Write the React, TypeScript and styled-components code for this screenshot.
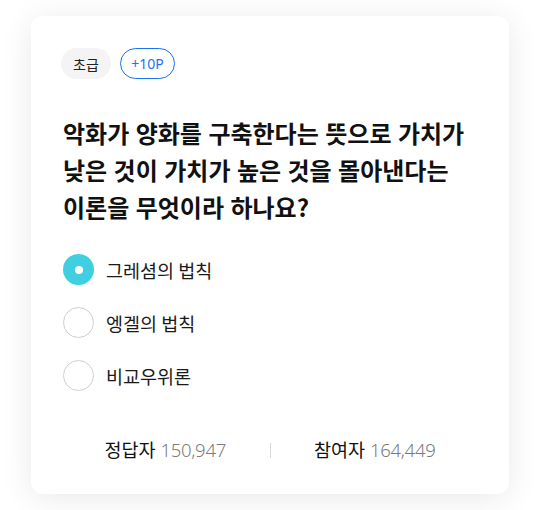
import React, { useState } from "react";
import styled, { createGlobalStyle } from "styled-components";

const Global = createGlobalStyle`
  html, body { margin: 0; padding: 0; background: #ffffff; }
  body { font-family: "Noto Sans", "Noto Sans CJK KR", sans-serif; color: #111; }
  * { box-sizing: border-box; }
`;

const Page = styled.div`
  padding: 16px 31px 16px 31px;
`;

const Card = styled.div`
  width: 478px;
  height: 478px;
  background: #fff;
  border-radius: 12px;
  box-shadow: 0 4px 32px rgba(0, 0, 0, 0.09);
  padding: 32px 30px 0 30px;
  display: flex;
  flex-direction: column;
`;

const Tags = styled.div`
  display: flex;
  gap: 9px;
`;

const Tag = styled.span<{ $variant: "level" | "point" }>`
  display: inline-flex;
  align-items: center;
  justify-content: center;
  height: 31px;
  width: ${(p) => (p.$variant === "level" ? "50px" : "55px")};
  border-radius: 16px;
  font-size: 14px;
  background: ${(p) => (p.$variant === "level" ? "#f4f4f4" : "#fff")};
  color: ${(p) => (p.$variant === "level" ? "#222" : "#1a73f0")};
  border: ${(p) => (p.$variant === "level" ? "none" : "1px solid #1a73f0")};
`;

const Question = styled.h2`
  margin: 35px 0 0 2px;
  font-family: "Noto Sans CJK KR", "Noto Sans", sans-serif;
  font-size: 24px;
  font-weight: 700;
  line-height: 37px;
  white-space: nowrap;
  word-spacing: 1px;
  color: #111;
`;

const Options = styled.div`
  margin-top: 29px;
  display: flex;
  flex-direction: column;
  gap: 22px;
`;

const Option = styled.label`
  display: flex;
  align-items: center;
  gap: 12px;
  cursor: pointer;
  padding-left: 2px;
`;

const Radio = styled.span<{ $checked: boolean }>`
  width: 31px;
  height: 31px;
  border-radius: 50%;
  flex: none;
  display: flex;
  align-items: center;
  justify-content: center;
  background: ${(p) => (p.$checked ? "#3fcfe1" : "#fff")};
  border: ${(p) => (p.$checked ? "none" : "1.5px solid #cfcfcf")};
  &::after {
    content: "";
    display: ${(p) => (p.$checked ? "block" : "none")};
    width: 8px;
    height: 8px;
    border-radius: 50%;
    background: #fff;
  }
`;

const OptionText = styled.span`
  font-family: "Noto Sans CJK KR", sans-serif;
  font-size: 18.5px;
  color: #1a1a1a;
`;

const Stats = styled.div`
  margin-top: 47px;
  display: flex;
  align-items: center;
`;

const Stat = styled.div`
  flex: 1;
  text-align: center;
  font-size: 18.5px;
  line-height: 24px;
  color: #111;
`;

const Num = styled.span`
  color: #7c7c7c;
  font-weight: 300;
  letter-spacing: -0.3px;
`;

const Divider = styled.span`
  width: 1px;
  height: 15px;
  background: #d8d8d8;
`;

const options = ["그레셤의 법칙", "엥겔의 법칙", "비교우위론"];

export default function App() {
  const [sel, setSel] = useState(0);
  return (
    <Page>
      <Global />
      <Card>
        <Tags>
          <Tag $variant="level">초급</Tag>
          <Tag $variant="point">+10P</Tag>
        </Tags>
        <Question>
          악화가 양화를 구축한다는 뜻으로 가치가
          <br />
          낮은 것이 가치가 높은 것을 몰아낸다는
          <br />
          이론을 무엇이라 하나요?
        </Question>
        <Options>
          {options.map((o, i) => (
            <Option key={o} onClick={() => setSel(i)}>
              <Radio $checked={sel === i} />
              <OptionText>{o}</OptionText>
            </Option>
          ))}
        </Options>
        <Stats>
          <Stat>
            정답자 <Num>150,947</Num>
          </Stat>
          <Divider />
          <Stat>
            참여자 <Num>164,449</Num>
          </Stat>
        </Stats>
      </Card>
    </Page>
  );
}
